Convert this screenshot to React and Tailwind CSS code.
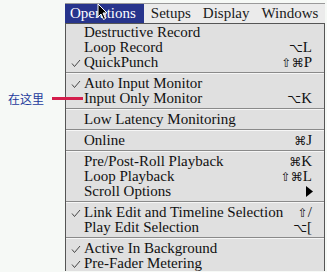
const groups = [
  [
    { label: 'Destructive Record' },
    { label: 'Loop Record', key: ['⌥', 'L'] },
    { label: 'QuickPunch', key: ['⇧⌘', 'P'], checked: true },
  ],
  [
    { label: 'Auto Input Monitor', checked: true },
    { label: 'Input Only Monitor', key: ['⌥', 'K'] },
  ],
  [{ label: 'Low Latency Monitoring' }],
  [{ label: 'Online', key: ['⌘', 'J'] }],
  [
    { label: 'Pre/Post-Roll Playback', key: ['⌘', 'K'] },
    { label: 'Loop Playback', key: ['⇧⌘', 'L'] },
    { label: 'Scroll Options', submenu: true },
  ],
  [
    { label: 'Link Edit and Timeline Selection', key: ['⇧', '/'], checked: true },
    { label: 'Play Edit Selection', key: ['⌥', '['] },
  ],
  [
    { label: 'Active In Background', checked: true },
    { label: 'Pre-Fader Metering', checked: true },
  ],
]

function Check() {
  return (
    <svg width="10" height="10" viewBox="0 0 10 10" className="shrink-0">
      <polyline points="1,5.5 3.5,8.5 9,2" fill="none" stroke="#333" strokeWidth="0.9" />
    </svg>
  )
}

function Row({ item }) {
  return (
    <div className="flex h-[15px] items-center pr-[12px] leading-none">
      <div className="flex w-[18px] justify-end pr-[3px]">{item.checked && <Check />}</div>
      <span className="flex-1 whitespace-nowrap">{item.label}</span>
      {item.key && (
        <span className="flex items-center whitespace-nowrap">
          <span className="font-['DejaVu_Sans',sans-serif] text-[12px] text-[#111]">{item.key[0]}</span>
          <span>{item.key[1]}</span>
        </span>
      )}
      {item.submenu && (
        <svg width="7" height="11" viewBox="0 0 7 11" className="mr-[-1px]">
          <polygon points="0,0 7,5.5 0,11" fill="#000" />
        </svg>
      )}
    </div>
  )
}

export default function App() {
  return (
    <div className="relative h-[272px] w-[327px] overflow-hidden bg-[#f6f9f6] font-['Liberation_Serif',serif] text-[15px] text-[#111]">
      <div className="ml-[65px] mt-[3px] w-[260px]">
        <div className="flex h-[20px] items-center border-t border-[#9a9a9a] bg-[#ebebeb] text-[#1a1a1a]">
          <div className="flex h-full items-center bg-[#27348c] pl-[5px] pr-[8px] text-white">Operations</div>
          <div className="ml-[7px]">Setups</div>
          <div className="ml-[12px]">Display</div>
          <div className="ml-[12px]">Windows</div>
        </div>
        <div className="border-x border-t border-[#555] bg-[#e0e0e0] pt-[1px]">
          {groups.map((g, i) => (
            <div key={i}>
              {i > 0 && (
                <div className="my-[2px] border-t border-b border-t-[#8a8a8a] border-b-[#f6f6f6]" />
              )}
              {g.map((item) => (
                <Row key={item.label} item={item} />
              ))}
            </div>
          ))}
        </div>
      </div>

      <div className="absolute left-[8px] top-[90px] font-['Noto_Sans_CJK_SC',sans-serif] text-[12px] text-[#1d3a9c]">
        在这里
      </div>
      <div className="absolute left-[52px] top-[97px] h-[3px] w-[31px] bg-[#d41e4c]" />

      <svg className="absolute left-[97px] top-[3px]" width="12" height="18" viewBox="0 0 12 18">
        <path d="M1 1 L1 14 L4 11 L6.5 16.5 L8.5 15.5 L6 10 L10 10 Z" fill="#000" stroke="#fff" strokeWidth="1" />
      </svg>
    </div>
  )
}
